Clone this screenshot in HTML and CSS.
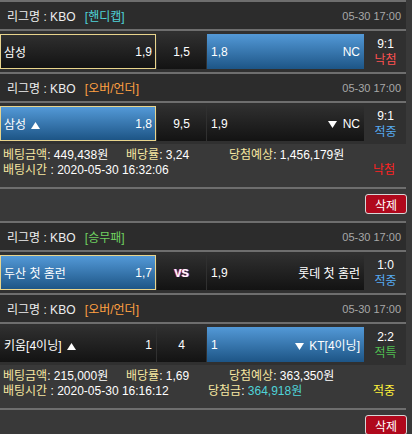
FILE: index.html
```html
<!DOCTYPE html>
<html lang="ko">
<head>
<meta charset="UTF-8">
<meta name="viewport" content="width=device-width, initial-scale=1.0">
<title>Bet History</title>
<link rel="stylesheet" href="styles.css">
</head>
<body>

<div class="board">

  <!-- GAME 1 -->
  <div class="game">
    <div class="game-head">
      <span class="league">리그명 : KBO <span class="type handi">[핸디캡]</span></span>
      <span class="time">05-30 17:00</span>
    </div>
    <div class="game-row">
      <div class="pick home sel"><span>삼성</span><span>1,9</span></div>
      <div class="pick mid">1,5</div>
      <div class="pick away on"><span>1,8</span><span>NC</span></div>
      <div class="result"><span>9:1</span><span class="lose">낙첨</span></div>
    </div>
  </div>

  <!-- GAME 2 -->
  <div class="game">
    <div class="game-head">
      <span class="league">리그명 : KBO <span class="type ou">[오버/언더]</span></span>
      <span class="time">05-30 17:00</span>
    </div>
    <div class="game-row">
      <div class="pick home on sel"><span>삼성 <svg class="tri" viewBox="0 0 9 7"><path d="M4.5 0L9 7H0z"/></svg></span><span>1,8</span></div>
      <div class="pick mid">9,5</div>
      <div class="pick away"><span>1,9</span><span><svg class="tri" viewBox="0 0 9 7"><path d="M0 0H9L4.5 7z"/></svg> NC</span></div>
      <div class="result"><span>9:1</span><span class="hit">적중</span></div>
    </div>
    <div class="bet">
      <div class="bet-line">
        <span class="c-amt"><span class="lbl">베팅금액</span>: 449,438원</span>
        <span class="c-rate"><span class="lbl">배당률</span>: 3,24</span>
        <span><span class="lbl">당첨예상</span>: 1,456,179원</span>
      </div>
      <div class="bet-line">
        <span class="c-time"><span class="lbl">배팅시간</span> : 2020-05-30 16:32:06</span>
        <span class="c-win"></span>
        <span class="state-lose">낙첨</span>
      </div>
    </div>
    <div class="del-bar"><button class="del-btn">삭제</button></div>
  </div>

  <!-- GAME 3 -->
  <div class="game">
    <div class="game-head">
      <span class="league">리그명 : KBO <span class="type wdl">[승무패]</span></span>
      <span class="time">05-30 17:00</span>
    </div>
    <div class="game-row">
      <div class="pick home on sel"><span>두산 첫 홈런</span><span>1,7</span></div>
      <div class="pick mid"><span class="vs">VS</span></div>
      <div class="pick away"><span>1,9</span><span>롯데 첫 홈런</span></div>
      <div class="result"><span>1:0</span><span class="hit">적중</span></div>
    </div>
  </div>

  <!-- GAME 4 -->
  <div class="game">
    <div class="game-head">
      <span class="league">리그명 : KBO <span class="type ou">[오버/언더]</span></span>
      <span class="time">05-30 17:00</span>
    </div>
    <div class="game-row">
      <div class="pick home"><span>키움[4이닝] <svg class="tri" viewBox="0 0 9 7"><path d="M4.5 0L9 7H0z"/></svg></span><span>1</span></div>
      <div class="pick mid">4</div>
      <div class="pick away on"><span>1</span><span><svg class="tri" viewBox="0 0 9 7"><path d="M0 0H9L4.5 7z"/></svg> KT[4이닝]</span></div>
      <div class="result"><span>2:2</span><span class="special">적특</span></div>
    </div>
    <div class="bet">
      <div class="bet-line">
        <span class="c-amt"><span class="lbl">베팅금액</span>: 215,000원</span>
        <span class="c-rate"><span class="lbl">배당률</span>: 1,69</span>
        <span><span class="lbl">당첨예상</span>: 363,350원</span>
      </div>
      <div class="bet-line">
        <span class="c-time"><span class="lbl">배팅시간</span> : 2020-05-30 16:16:12</span>
        <span class="c-win"><span class="lbl">당첨금</span>: <span class="won">364,918원</span></span>
        <span class="state-hit">적중</span>
      </div>
    </div>
    <div class="del-bar"><button class="del-btn">삭제</button></div>
  </div>

</div>

</body>
</html>
```

FILE: styles.css
```css
body {
  margin: 0;
  background: #393939;
  color: #fff;
  font-family: "Liberation Sans", "Noto Sans CJK KR", sans-serif;
  font-size: 12px;
}

.board { width: 406px; }

/* league header */
.game-head {
  display: flex;
  justify-content: space-between;
  align-items: center;
  height: 27px;
  padding: 0 5px 0 7px;
  background: #2c2c2c;
  border-top: 2px solid #6e6e6e;
  border-bottom: 2px solid #6e6e6e;
}
.league { color: #eee; }
.type { margin-left: 6px; }
.handi { color: #4fd3d8; }
.ou { color: #ffa042; }
.wdl { color: #6fd160; }
.time { color: #a8a8a8; font-size: 11px; }

/* pick row */
.game-row {
  display: flex;
  gap: 1px;
  padding: 3px 0;
  background: #303030;
}
.pick {
  box-sizing: border-box;
  height: 35px;
  display: flex;
  align-items: center;
  justify-content: space-between;
  padding: 0 4px;
  background: linear-gradient(#2f2f2f, #131313);
}
.pick.home { width: 156px; }
.pick.mid { width: 49px; justify-content: center; }
.pick.away { width: 157px; }
.pick.on { background: linear-gradient(#5399d7, #1d5586); }
.pick.sel { border: 1px solid #e8d48c; padding: 0 3px; }

.tri { width: 9px; height: 7px; fill: #fff; margin: 0 2px; }

.vs {
  font-weight: bold;
  font-size: 11px;
  text-shadow: -1px 0 #e03a3a, 1px 0 #3a52e0;
}

.result {
  flex: 1;
  display: flex;
  flex-direction: column;
  align-items: center;
  justify-content: center;
  line-height: 16px;
}
.lose { color: #ff5050; }
.hit { color: #56aaf0; }
.special { color: #50be50; }

/* bet info */
.bet {
  padding: 4px 0 9px 3px;
  line-height: 15px;
  border-bottom: 2px solid #6e6e6e;
}
.bet-line { display: flex; white-space: nowrap; }
.c-amt { width: 123px; }
.c-rate { width: 103px; }
.c-time { width: 205px; }
.c-win { width: 165px; }
.lbl { color: #f6e7a1; }
.won { color: #4fd3d8; }
.state-lose { color: #ff2222; }
.state-hit { color: #fff23a; }

/* delete */
.del-bar {
  display: flex;
  justify-content: flex-end;
  padding: 5px 0 7px;
  margin-right: -1px;
}
.del-btn {
  width: 42px;
  height: 20px;
  padding: 0;
  background: #b0081c;
  border: 1px solid #d6d6d6;
  border-radius: 3px;
  color: #fff;
  font-family: "Liberation Sans", "Noto Sans CJK KR", sans-serif;
  font-size: 12px;
}
```
